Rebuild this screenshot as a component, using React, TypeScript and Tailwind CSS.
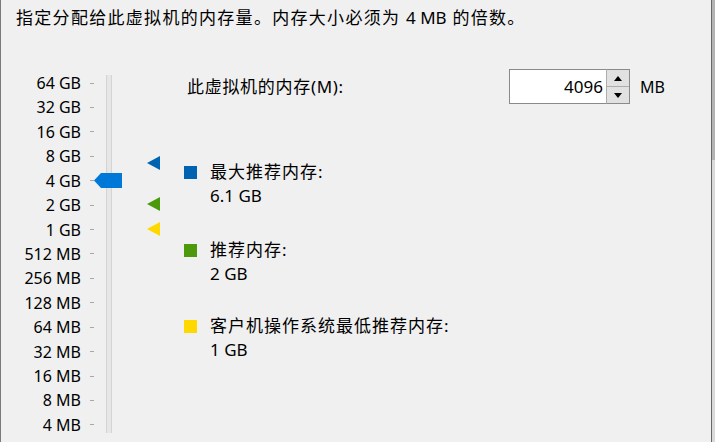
import React from "react";

const FONT = "font-['Noto_Sans','Noto_Sans_CJK_SC',sans-serif]";

const ticks = [
  "64 GB",
  "32 GB",
  "16 GB",
  "8 GB",
  "4 GB",
  "2 GB",
  "1 GB",
  "512 MB",
  "256 MB",
  "128 MB",
  "64 MB",
  "32 MB",
  "16 MB",
  "8 MB",
  "4 MB",
];

type Legend = { color: string; label: string; value: string; gap: string };

const legends: Legend[] = [
  { color: "bg-[#0063b1]", label: "最大推荐内存:", value: "6.1 GB", gap: "mt-[56px]" },
  { color: "bg-[#4c9a0c]", label: "推荐内存:", value: "2 GB", gap: "mt-[30px]" },
  { color: "bg-[#ffd800]", label: "客户机操作系统最低推荐内存:", value: "1 GB", gap: "mt-[28px]" },
];

function Marker({ color, className }: { color: string; className: string }) {
  return (
    <svg className={`absolute ${className}`} width="13" height="14" viewBox="0 0 13 14">
      <polygon points="0,7 13,0 13,14" fill={color} />
    </svg>
  );
}

function MemorySlider() {
  return (
    <div className="relative flex w-[183px] shrink-0">
      {/* scale labels + tick marks */}
      <div className="mt-[40.8px] flex flex-col">
        {ticks.map((t) => (
          <div key={t} className="flex h-[24.43px] items-center">
            <span className="w-[80px] text-right text-[16px] leading-none text-black">{t}</span>
            <span className="ml-[9px] h-px w-[4px] bg-[#a8a8a8]" />
          </div>
        ))}
      </div>

      {/* track */}
      <div className="ml-[12px] mt-[45px] h-[358px] w-[6px] border-x border-[#d4d4d4] bg-[#e6e6e6]" />

      {/* thumb */}
      <svg className="absolute left-[93px] top-[143px]" width="28" height="15" viewBox="0 0 28 15">
        <polygon points="0,7.5 7,0 28,0 28,15 7,15" fill="#0078d7" />
      </svg>

      <Marker color="#0063b1" className="left-[146px] top-[126px]" />
      <Marker color="#4c9a0c" className="left-[146px] top-[167px]" />
      <Marker color="#ffd800" className="left-[146px] top-[192px]" />
    </div>
  );
}

function SpinBox() {
  return (
    <div className="flex h-[35px]">
      <div className="flex w-[97px] items-center justify-end border border-r-0 border-[#8a8a8a] bg-white pr-[3px] text-[17px] text-black">
        4096
      </div>
      <div className="flex w-[24px] flex-col border border-l-[#adadad] border-[#8a8a8a]">
        <div className="flex flex-1 items-center justify-center border-b border-[#adadad] bg-[#e1e1e1]">
          <svg width="8" height="5" viewBox="0 0 8 5">
            <polygon points="4,0 8,5 0,5" fill="#000" />
          </svg>
        </div>
        <div className="flex flex-1 items-center justify-center bg-[#e1e1e1]">
          <svg width="8" height="5" viewBox="0 0 8 5">
            <polygon points="0,0 8,0 4,5" fill="#000" />
          </svg>
        </div>
      </div>
    </div>
  );
}

export default function App() {
  return (
    <div className={`flex h-[442px] w-[715px] overflow-hidden border-l border-[#7a7a7a] bg-[#f0f0f0] ${FONT}`}>
      <div className="flex flex-1 flex-col">
        <p className="h-[30px] pl-[15px] pt-[6px] text-[17px] leading-[24px] tracking-[1.3px] text-black">
          指定分配给此虚拟机的内存量。内存大小必须为 <span className="tracking-normal">4 MB</span> 的倍数。
        </p>

        <div className="flex flex-1">
          <MemorySlider />

          <div className="flex flex-col">
            <div className="mt-[39px] flex items-center">
              <span className="w-[325px] pl-[3px] text-[17px] tracking-[0.7px] text-black">此虚拟机的内存(M):</span>
              <SpinBox />
              <span className="ml-[10px] text-[16px] text-black">MB</span>
            </div>

            {legends.map((l) => (
              <div key={l.label} className={`${l.gap} flex flex-col`}>
                <div className="flex h-[24px] items-center">
                  <span className={`h-[13px] w-[13px] ${l.color}`} />
                  <span className="ml-[13px] text-[17px] tracking-[1px] text-black">{l.label}</span>
                </div>
                <div className="flex h-[24px] items-center pl-[26px] text-[17px] text-black">{l.value}</div>
              </div>
            ))}
          </div>
        </div>
      </div>

      {/* right window edge / scrollbar sliver */}
      <div className="flex w-[4px] shrink-0 flex-col border-l border-[#696969]">
        <div className="h-[160px] bg-[#b4b4b4]" />
        <div className="flex-1 bg-[#dadada]" />
      </div>
    </div>
  );
}
